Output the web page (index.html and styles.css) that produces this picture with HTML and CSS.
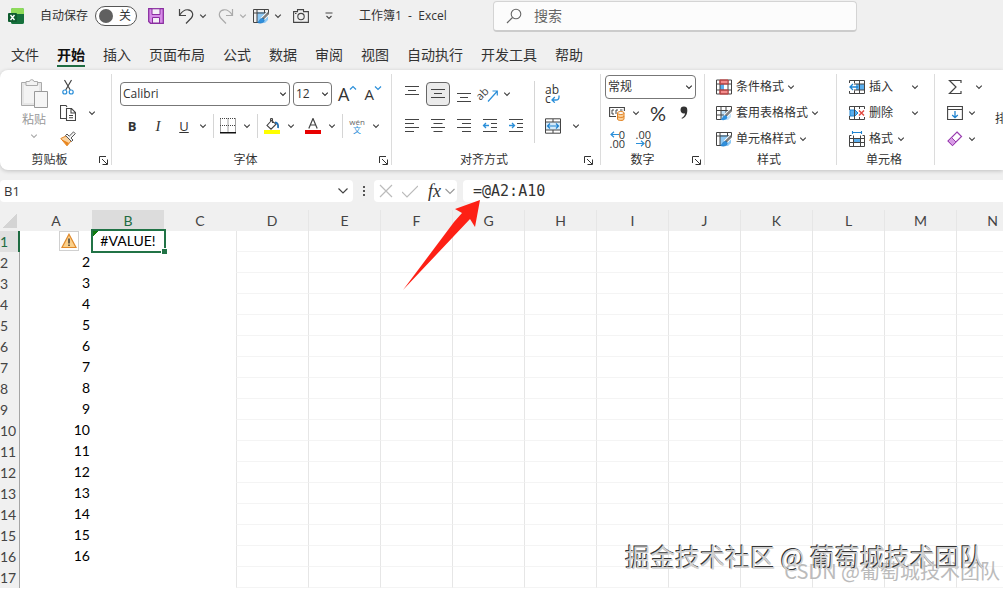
FILE: index.html
```html
<!DOCTYPE html>
<html lang="zh-CN">
<head>
  <meta charset="UTF-8"/>
  <meta name="viewport" content="width=device-width, initial-scale=1"/>
  <title>工作簿1 - Excel</title>
  <link rel="stylesheet" href="styles.css">
</head>
<body>
  <svg class="defs" aria-hidden="true">
    <symbol id="chev" viewBox="0 0 8 8"><path d="M1.2 2.6 4 5.4 6.8 2.6" fill="none" stroke="currentColor" stroke-width="1.2"/></symbol>
    <symbol id="launch" viewBox="0 0 9 9"><path d="M.5 7V.5H7M3 3l5 5M8.500 3.500v5h-5" fill="none" stroke="#333"/></symbol>
    <symbol id="pen-table" viewBox="0 0 16 16">
      <path d="M4 4h11v8l-3 3H4z" fill="#8ec9f5"/>
      <path d="M.5 1.500h15v4M.5 1.500v13h5M4 1v14M.5 5h15M11.500 1v4" fill="none" stroke="#444"/>
      <path d="M15.500 5 9 11.500" stroke="#fff" stroke-width="4"/>
      <path d="M15.500 5 9.500 11" stroke="#444" stroke-width="2.200"/><path d="m15 5.500-5 5" stroke="#ddd" stroke-width=".8"/>
      <path d="M9.800 10.200c-3-.5-2.800 3-5.300 4.300 3.300 1.500 7 .2 6.800-2.700z" fill="#2f8fdc" stroke="#1b6db5" stroke-width=".5"/>
    </symbol>
  </svg>

  <header class="titlebar">
    <svg class="logo" viewBox="0 0 16 16"><rect x="3" width="13" height="16" rx="2" fill="#21a366"/><path d="M5 0h9a2 2 0 0 1 2 2v4H3V2a2 2 0 0 1 2-2" fill="#8fdb5a"/><path d="M9 6h7v8a2 2 0 0 1-2 2H5a2 2 0 0 1-2-2V9z" fill="#16703c"/><rect y="5" width="9" height="9" rx="1" fill="#0f5c2f"/><path d="m2.500 7 4 5M6.500 7l-4 5" stroke="#fff" stroke-width="1.400"/></svg>
    <label class="autosave">自动保存
      <span class="switch"><input type="checkbox"><span>关</span></span>
    </label>
    <div class="quick">
      <button class="save" aria-label="保存"><svg class="ic" viewBox="0 0 16 16"><path d="M.7.7h14.600v14.600H2.500L.7 13.500z" fill="#d78be8" stroke="#8a2fa0" stroke-width="1.300"/><path d="M4 .8h8v5.700H4zM4.500 9.500h7v5.500h-7z" fill="#f5f0f7" stroke="#8a2fa0"/></svg></button>
      <button class="split" aria-label="撤消"><svg class="ic" viewBox="0 0 16 16"><path d="M1.500 1v6.500H8M1.800 7C4 3.500 7 1.500 10 1.800c4.500.5 6 5 3.300 8.200L8 15.500" fill="none" stroke="#444" stroke-width="1.200"/></svg><svg class="chev"><use href="#chev"/></svg></button>
      <button class="split off" aria-label="恢复"><svg class="ic" viewBox="0 0 16 16"><path d="M14.500 1v6.500H8M14.200 7C12 3.500 9 1.500 6 1.800 1.500 2.300 0 6.800 2.700 10L8 15.500" fill="none" stroke="currentColor" stroke-width="1.200"/></svg><svg class="chev"><use href="#chev"/></svg></button>
      <button class="split" aria-label="单元格样式"><svg class="ic"><use href="#pen-table"/></svg><svg class="chev"><use href="#chev"/></svg></button>
      <button aria-label="照相机"><svg class="ic" viewBox="0 0 16 16"><path d="M.6 3.600h3.900V1.600h6v2h4.900v10.800H.6z" fill="none" stroke="#444" stroke-width="1.100"/><circle cx="8" cy="8.600" r="3.200" fill="none" stroke="#444" stroke-width="1.100"/><path d="M2 5.500h1.500" stroke="#444"/></svg></button>
      <button class="more" aria-label="自定义快速访问工具栏"><svg class="chev" viewBox="0 0 8 8"><path d="M.5 1h7M1.500 4 4 6.500 6.500 4" fill="none" stroke="#444" stroke-width="1.100"/></svg></button>
    </div>
    <span class="doc">工作簿1&nbsp; -&nbsp; Excel</span>
    <label class="search">
      <svg class="ic" viewBox="0 0 16 16"><circle cx="10" cy="6" r="4.800" fill="none" stroke="#666" stroke-width="1.100"/><path d="M6.500 9.500 1 15" stroke="#666" stroke-width="1.200"/></svg>
      <input type="text" placeholder="搜索" aria-label="搜索">
    </label>
  </header>

  <nav class="tabs">
    <a href="#">文件</a>
    <a href="#" class="active">开始</a>
    <a href="#">插入</a>
    <a href="#">页面布局</a>
    <a href="#">公式</a>
    <a href="#">数据</a>
    <a href="#">审阅</a>
    <a href="#">视图</a>
    <a href="#">自动执行</a>
    <a href="#">开发工具</a>
    <a href="#">帮助</a>
  </nav>

  <section class="ribbon">
    <div class="group clipboard">
      <div class="body">
        <button class="paste">
          <svg viewBox="0 0 28 31"><path d="M1.500 4.500h20v23h-20z" fill="#e6e6e6" stroke="#aaa"/><path d="M4 7h15v18H4z" fill="#f3f3f3"/><path d="M6 7.500v-4h3.500a2.300 2.300 0 0 1 4.500 0H17.500v4z" fill="#f2f2f2" stroke="#aaa"/><path d="M14.500 13.500h13v16h-13z" fill="#f5f5f5" stroke="#999"/></svg>
          粘贴
          <svg class="chev"><use href="#chev"/></svg>
        </button>
        <div class="rows three">
          <div class="row"><button aria-label="剪切"><svg class="ic" viewBox="0 0 16 16"><path d="m4.500 1 5.800 10M11.500 1 5.700 11" stroke="#444" stroke-width="1.200"/><circle cx="4.800" cy="13" r="2" fill="none" stroke="#2b8fd9" stroke-width="1.200"/><circle cx="11.200" cy="13" r="2" fill="none" stroke="#2b8fd9" stroke-width="1.200"/></svg></button></div>
          <div class="row"><button class="split" aria-label="复制"><svg class="ic" viewBox="0 0 16 16"><path d="M6 13.500H.5V.5h5.500l1 1.500M6.500 3.500h5l4 4v8h-9zM11 3.500v4.500h4.500M9 10.500h4M9 12.800h4" fill="none" stroke="#444" stroke-width="1.100"/></svg><svg class="chev"><use href="#chev"/></svg></button></div>
          <div class="row"><button aria-label="格式刷"><svg class="ic" viewBox="0 0 16 16"><path d="M6 5 .8 7.500 7 14.800l4-4.800z" fill="#fbd3a0" stroke="#e08020"/><path d="m2 8.500 7 3.500-2 2.800z" fill="#e9851d"/><path d="m5.500 4.500 6 6 1.500-1.500-2-2 4.300-4.300-1.800-1.800L9.200 5.200l-2.200-2.200z" fill="#f4f4f4" stroke="#555"/></svg></button></div>
        </div>
      </div>
      <div class="caption"><span>剪贴板</span><button aria-label="剪贴板设置"><svg><use href="#launch"/></svg></button></div>
    </div>

    <div class="group font">
      <div class="body rows two">
        <div class="row fields">
          <select class="face" aria-label="字体"><option>Calibri</option></select>
          <select class="size" aria-label="字号"><option>12</option></select>
          <button class="grow" aria-label="增大字号">A<svg class="chev" viewBox="0 0 8 8"><path d="M1 5.500 4 2.500l3 3" fill="none" stroke="#2b8fd9" stroke-width="1.200"/></svg></button>
          <button class="shrink" aria-label="减小字号">A<svg class="chev" viewBox="0 0 8 8"><path d="m1 2.500 3 3 3-3" fill="none" stroke="#2b8fd9" stroke-width="1.200"/></svg></button>
        </div>
        <div class="row format">
          <button class="letter"><b>B</b></button>
          <button class="letter"><i>I</i></button>
          <button class="split letter"><u>U</u><svg class="chev"><use href="#chev"/></svg></button>
          <span class="sep"></span>
          <button class="split" aria-label="边框"><svg class="ic" viewBox="0 0 16 16"><path d="M.5.5v13M15.500.5v13M8 .5v13M0 .5h16M0 7.500h16" fill="none" stroke="#444" stroke-dasharray="1 1"/><path d="M0 14.800h16" stroke="#111" stroke-width="1.500"/></svg><svg class="chev"><use href="#chev"/></svg></button>
          <span class="sep"></span>
          <button class="split" aria-label="填充颜色"><svg class="ic" viewBox="0 0 16 16"><path d="M7.500 2.500 3 7.500l4 3.700 5-5zM8.500 5V1.200c0-1-2-1-2 0V3" fill="none" stroke="#444" stroke-width="1.100"/><path d="M11 4.500c2.500 0 3.500 2 3 5.500" fill="none" stroke="#1b6db5" stroke-width="1.800"/><path d="M0 12h16v4H0z" fill="#ff0"/></svg><svg class="chev"><use href="#chev"/></svg></button>
          <button class="split" aria-label="字体颜色"><svg class="ic" viewBox="0 0 16 16"><path d="M3.800 10.500 8 .5l4.200 10M5.300 7h5.400" fill="none" stroke="#444" stroke-width="1.200"/><path d="M0 12h16v4H0z" fill="#e80000"/></svg><svg class="chev"><use href="#chev"/></svg></button>
          <span class="sep"></span>
          <button class="split" aria-label="拼音指南"><span class="pinyin">wén<em>文</em></span><svg class="chev"><use href="#chev"/></svg></button>
        </div>
      </div>
      <div class="caption"><span>字体</span><button aria-label="字体设置"><svg><use href="#launch"/></svg></button></div>
    </div>

    <div class="group align">
      <div class="body">
        <div class="rows two">
          <div class="row">
            <button aria-label="顶端对齐"><svg class="ic" viewBox="0 0 16 16"><path d="M1 .5h14M4 4.500h8M1 8.500h14" stroke="#444" stroke-width="1.200"/></svg></button>
            <button class="pressed" aria-label="垂直居中"><svg class="ic" viewBox="0 0 16 16"><path d="M1 3.500h14M4 7.500h8M1 11.500h14" stroke="#444" stroke-width="1.200"/></svg></button>
            <button aria-label="底端对齐"><svg class="ic" viewBox="0 0 16 16"><path d="M1 7.500h14M4 11.500h8M1 15.500h14" stroke="#444" stroke-width="1.200"/></svg></button>
            <button class="split orient" aria-label="方向"><svg class="ic" viewBox="0 0 16 16"><text x="-5" y="9" transform="rotate(-45 4 8)" font-size="11" fill="#444">ab</text><path d="m6 15.500 9-10M10.500 5H15.300v4.500" fill="none" stroke="#2b8fd9" stroke-width="1.200"/></svg><svg class="chev"><use href="#chev"/></svg></button>
          </div>
          <div class="row">
            <button aria-label="左对齐"><svg class="ic" viewBox="0 0 16 16"><path d="M1 1.500h14M1 5.500h9M1 9.500h14M1 13.500h9" stroke="#444" stroke-width="1.200"/></svg></button>
            <button aria-label="居中"><svg class="ic" viewBox="0 0 16 16"><path d="M1 1.500h14M3.500 5.500h9M1 9.500h14M3.500 13.500h9" stroke="#444" stroke-width="1.200"/></svg></button>
            <button aria-label="右对齐"><svg class="ic" viewBox="0 0 16 16"><path d="M1 1.500h14M6 5.500h9M1 9.500h14M6 13.500h9" stroke="#444" stroke-width="1.200"/></svg></button>
            <button aria-label="减少缩进量"><svg class="ic" viewBox="0 0 16 16"><path d="M1 1.500h14M9 5.500h6M9 9.500h6M1 13.500h14" stroke="#444" stroke-width="1.200"/><path d="M7 7.500H1.500M4 5 1.500 7.500 4 10" fill="none" stroke="#2b8fd9" stroke-width="1.300"/></svg></button>
            <button aria-label="增加缩进量"><svg class="ic" viewBox="0 0 16 16"><path d="M1 1.500h14M9 5.500h6M9 9.500h6M1 13.500h14" stroke="#444" stroke-width="1.200"/><path d="M1 7.500h5.500M4 5l2.500 2.500L4 10" fill="none" stroke="#2b8fd9" stroke-width="1.300"/></svg></button>
          </div>
        </div>
        <span class="sep tall"></span>
        <div class="rows two">
          <div class="row"><button class="wrap" aria-label="自动换行">ab<span>c<svg viewBox="0 0 9 8"><path d="M8 .5v1.500q0 3-3 3H1M3.800 2 1 5l2.800 2.700" fill="none" stroke="#2b8fd9" stroke-width="1.300"/></svg></span></button></div>
          <div class="row"><button class="split wide" aria-label="合并后居中"><svg class="ic" viewBox="0 0 16 16"><path d="M1 4h14v8H1z" fill="#d5ebfa"/><path d="M.5.8h15v14.400H.5zM.5 4h15M.5 12h15M8 1v3M8 12v3" fill="none" stroke="#444"/><path d="M2.500 8h11M5 5.500 2.500 8 5 10.500M11 5.500 13.500 8 11 10.500" fill="none" stroke="#1f83d0" stroke-width="1.200"/></svg><svg class="chev"><use href="#chev"/></svg></button></div>
        </div>
      </div>
      <div class="caption"><span>对齐方式</span><button aria-label="对齐设置"><svg><use href="#launch"/></svg></button></div>
    </div>

    <div class="group number">
      <div class="body rows three">
        <div class="row"><select class="kind" aria-label="数字格式"><option>常规</option></select></div>
        <div class="row nums">
          <button class="split" aria-label="会计数字格式"><svg class="ic" viewBox="0 0 16 16"><path d="M7 11.500H.6v-9h14.800V6" fill="none" stroke="#444" stroke-width="1.100"/><path d="M5 5H3v4h2M9 5H7v4M11 5h2.500" fill="none" stroke="#444"/><path d="M8.500 8v6c0 2 6.500 2 6.500 0V8" fill="#fbd09a" stroke="#e08020"/><ellipse cx="11.800" cy="8" rx="3.300" ry="1.500" fill="#fff" stroke="#e08020"/><path d="M8.500 11c0 2 6.500 2 6.500 0" fill="none" stroke="#e08020"/></svg><svg class="chev"><use href="#chev"/></svg></button>
          <button class="percent">%</button>
          <button aria-label="千位分隔样式"><svg class="ic" viewBox="0 0 16 16"><path d="M4.500 5a3.300 3.300 0 1 1 6.800 0c.2 4.500-2 7.500-5.300 8.800L5.500 13C8 11.500 9 10 9 8.200 6.500 9 4.500 7.300 4.500 5" fill="#333"/></svg></button>
        </div>
        <div class="row nums">
          <button class="decimals" aria-label="增加小数位数"><span><svg viewBox="0 0 9 7"><path d="M9 3.500H1M4 .8 1 3.500l3 2.700" fill="none" stroke="#2b8fd9" stroke-width="1.200"/></svg>0</span><span>.00</span></button>
          <button class="decimals" aria-label="减少小数位数"><span>.00</span><span><svg viewBox="0 0 9 7"><path d="M0 3.500h8M5 .8l3 2.700-3 2.700" fill="none" stroke="#2b8fd9" stroke-width="1.200"/></svg>0</span></button>
        </div>
      </div>
      <div class="caption"><span>数字</span><button aria-label="数字设置"><svg><use href="#launch"/></svg></button></div>
    </div>

    <div class="group styles">
      <div class="body rows three">
        <div class="row"><button class="cmd"><svg class="ic" viewBox="0 0 16 16"><path d="M4 1h7v4H4zM4 11h7v4H4z" fill="#f58c8c"/><path d="M4 5h4v6H4z" fill="#5aaeee"/><path d="M.5 1h15v14H.5zM4 1v14M12 1v14M.5 5h15M.5 11h15" fill="none" stroke="#444"/><path d="M4 1h8v4H4zM4 11h8v4H4z" fill="none" stroke="#dc3c3c"/></svg>条件格式<svg class="chev"><use href="#chev"/></svg></button></div>
        <div class="row"><button class="cmd"><svg class="ic" viewBox="0 0 16 16"><path d="M5 5h10v7l-3 3H5z" fill="#bfe0f8"/><path d="M.5 1.500h15v4M.5 1.500v13h5M5 1v14M10 1v8M.5 5.500h15M.5 10h9" fill="none" stroke="#444"/><path d="M15.500 5 9 11.500" stroke="#fff" stroke-width="4"/><path d="M15.500 5 9.500 11" stroke="#444" stroke-width="2.200"/><path d="m15 5.500-5 5" stroke="#ddd" stroke-width=".8"/><path d="M9.800 10.200c-3-.5-2.800 3-5.300 4.300 3.300 1.500 7 .2 6.800-2.700z" fill="#2f8fdc"/></svg>套用表格格式<svg class="chev"><use href="#chev"/></svg></button></div>
        <div class="row"><button class="cmd"><svg class="ic"><use href="#pen-table"/></svg>单元格样式<svg class="chev"><use href="#chev"/></svg></button></div>
      </div>
      <div class="caption"><span>样式</span></div>
    </div>

    <div class="group cells">
      <div class="body rows three">
        <div class="row"><button class="cmd spread"><svg class="ic" viewBox="0 0 16 16"><path d="M7 5h8v6H7z" fill="#5aaeee"/><path d="M.5 4V1.500h15v13H.5V12M5.500 1.500V4M5.500 11.500v3M10.500 1.500v13M5 5h10.500M5 11h10.500" fill="none" stroke="#444"/><path d="M9 8H1M4 5 1 8l3 3" fill="none" stroke="#1f83d0" stroke-width="1.300"/></svg><span>插入</span><svg class="chev"><use href="#chev"/></svg></button></div>
        <div class="row"><button class="cmd spread"><svg class="ic" viewBox="0 0 16 16"><path d="M1 5h5l3 3-3 3H1z" fill="#5aaeee" stroke="#1f83d0"/><path d="M.5 5V1.500h15V4M.5 11v3.500h15V12M5.500 1.500v13M10.500 1.500V4M10.500 12v2.500" fill="none" stroke="#444"/><path d="m10 5.500 5 5M15 5.500l-5 5" stroke="#e0463c" stroke-width="1.400"/></svg><span>删除</span><svg class="chev"><use href="#chev"/></svg></button></div>
        <div class="row"><button class="cmd"><svg class="ic" viewBox="0 0 16 16"><path d="M5 7h6v4H5z" fill="#5aaeee"/><path d="M2.500 4.500H.5v11h15v-11h-2M4.500 4.500v11M11.500 4.500v11M.5 7.500h15M.5 11.500h15" fill="none" stroke="#444"/><path d="M3.500 1.500h9M3.500 0v3M12.500 0v3" fill="none" stroke="#1f83d0" stroke-width="1.100"/></svg><span>格式</span><svg class="chev"><use href="#chev"/></svg></button></div>
      </div>
      <div class="caption"><span>单元格</span></div>
    </div>

    <div class="group edit">
      <div class="body">
        <div class="rows three">
          <div class="row"><button class="split sum" aria-label="自动求和"><svg class="ic" viewBox="0 0 16 16"><path d="M14 4V1.500H2.500L9 8l-6.500 6.500H14V12" fill="none" stroke="#444" stroke-width="1.200"/></svg><svg class="chev"><use href="#chev"/></svg></button></div>
          <div class="row"><button class="split" aria-label="填充"><svg class="ic" viewBox="0 0 16 16"><path d="M.6 1.500h14.800v13H.6zM.6 4.500h14.800" fill="none" stroke="#444" stroke-width="1.100"/><path d="M8 6v6.500M5.200 10 8 12.700 10.800 10" fill="none" stroke="#1f83d0" stroke-width="1.300"/></svg><svg class="chev"><use href="#chev"/></svg></button></div>
          <div class="row"><button class="split" aria-label="清除"><svg class="ic" viewBox="0 0 16 16"><path d="m10 1 4.500 4.500-9 9L1 10z" fill="#fff" stroke="#9b3fb0" stroke-width="1.200"/><path d="m4.500 6.500 4.500 4.500-3.500 3.500L1 10z" fill="#d89be6" stroke="#9b3fb0"/></svg><svg class="chev"><use href="#chev"/></svg></button></div>
        </div>
        <button class="sort">排序和筛选</button>
      </div>
    </div>
  </section>

  <section class="formulabar">
    <select class="namebox" aria-label="名称框"><option>B1</option></select>
    <svg class="dots" viewBox="0 0 4 12"><path d="M1 1h2v2H1zM1 5h2v2H1zM1 9h2v2H1z" fill="#555"/></svg>
    <div class="fx">
      <button aria-label="取消"><svg class="ic" viewBox="0 0 16 16"><path d="m2 2 12 12M14 2 2 14" stroke="#bbb" stroke-width="1.200"/></svg></button>
      <button aria-label="输入"><svg class="ic" viewBox="0 0 16 16"><path d="m0 9 5 5L16 3" fill="none" stroke="#bbb" stroke-width="1.200"/></svg></button>
      <button class="fn">fx<svg viewBox="0 0 10 8"><path d="m.5 2 4.500 4.500L9.500 2" fill="none" stroke="#999" stroke-width="1.100"/></svg></button>
    </div>
    <input class="formula" type="text" value="=@A2:A10" aria-label="编辑栏">
  </section>

  <main class="sheet">
    <table>
      <thead><tr id="cols"><th class="corner"></th></tr></thead>
      <tbody id="rows"></tbody>
    </table>
  </main>

  <svg class="arrow" viewBox="0 0 80 92" aria-hidden="true"><path d="M78 1 53 10l7 4-8 9L1 91l67-71 5 8z" fill="#fd2015"/></svg>
  <div class="mark csdn">CSDN @葡萄城技术团队</div>
  <div class="mark juejin">掘金技术社区 @ 葡萄城技术团队</div>

  <script>
    const letters = 'ABCDEFGHIJKLMN'.split('');
    const cols = document.getElementById('cols');
    const rows = document.getElementById('rows');
    const warning = '<button class="warn" aria-label="错误检查"><svg viewBox="0 0 16 16"><path d="M8 1.200 15 14.500H1z" fill="#fbd08a" stroke="#e08a2c" stroke-width="1.200"/><path d="M8 5.500v5M8 11.500v1.500" stroke="#333" stroke-width="1.400"/></svg></button>';

    letters.forEach(l => {
      cols.innerHTML += `<th${l === 'B' ? ' class="on"' : ''}>${l}</th>`;
    });

    for (let r = 1; r <= 17; r++) {
      const cells = letters.map(l => {
        if (r === 1 && l === 'A') return `<td class="num">${warning}</td>`;
        if (r === 1 && l === 'B') return '<td class="selected">#VALUE!</td>';
        if (l === 'A' && r <= 16) return `<td class="num">${r}</td>`;
        return '<td></td>';
      });
      rows.innerHTML += `<tr><th${r === 1 ? ' class="on"' : ''}>${r}</th>${cells.join('')}</tr>`;
    }
  </script>
</body>
</html>
```

FILE: styles.css
```css
* { box-sizing:border-box; margin:0; padding:0 }
html, body { height:100% }
body {
  display:flex; flex-direction:column;
  position:relative; overflow:hidden;
  font-family:"Open Sans", "Noto Sans CJK SC", sans-serif;
  font-size:12px; line-height:16px;
  background:#f0f0f0; color:#333;
}
button, input, select { font:inherit; color:inherit; border:none; background:none; outline:none }
button { display:inline-flex; align-items:center; justify-content:center; flex:none }
svg { display:block; flex:none }
.defs { display:none }
.ic { width:16px; height:16px }
.chev { width:8px; height:8px; color:#444 }
.off, .off .chev { color:#aaa }
.split { gap:7px }
.split.wide { gap:11px }

/* title bar */
.titlebar { display:flex; align-items:center; height:32px; padding-left:8px; flex:none }
.logo { width:16px; height:16px }
.autosave { display:flex; align-items:center; gap:7px; margin-left:16px; white-space:nowrap }
.switch {
  display:flex; align-items:center; justify-content:space-between;
  width:42px; height:20px; padding:0 5px 0 3px;
  border:1px solid #555; border-radius:10px; background:#fff;
}
.switch input { appearance:none; width:14px; height:14px; border-radius:50%; background:#606060 }
.quick { display:flex; align-items:center; gap:11px; margin-left:11px }
.quick .split { gap:5px }
.quick .save { margin-right:3px }
.quick .off { margin-right:-5px }
.quick .more { margin-left:5px }
.doc { margin-left:26px; white-space:nowrap }
.search {
  display:flex; align-items:center; gap:12px;
  width:364px; height:31px; margin:1px 146px 0 auto; padding:0 12px;
  border:1px solid #d4d4d4; border-bottom:2px solid #ccc; border-radius:4px; background:#fcfcfc;
}
.search input { flex:1; min-width:0; font-size:14px }
.search input::placeholder { color:#666; opacity:1 }

/* tabs */
.tabs { display:flex; gap:18px; height:38px; padding:13px 0 0 11px; flex:none }
.tabs a { height:22px; font-size:14px; line-height:20px; color:#333; text-decoration:none; white-space:nowrap }
.tabs .active { color:#111; font-weight:bold; border-bottom:2px solid #1e6b41 }

/* ribbon */
.ribbon {
  display:flex; flex:none; overflow:hidden;
  height:100px; padding-top:4px;
  border-radius:8px 0 0 8px; background:#fff;
  box-shadow:0 1px 4px rgba(0,0,0,.2);
}
.group { display:flex; flex-direction:column; flex:none; border-right:1px solid #dcdcdc; height:91px }
.group .body { display:flex; height:78px; flex:none }
.group .rows { display:flex; flex-direction:column }
.row { display:flex; align-items:center }
.three .row { height:26px }
.two { padding-top:4px }
.two .row { height:32px; gap:10px }
.caption { display:flex; align-items:center; height:16px; padding-right:3px; flex:none }
.caption span { flex:1; text-align:center }
.caption svg { width:9px; height:9px }
.sep { width:1px; height:24px; margin:0 -4px; background:#d5d5d5 }
.sep.tall { height:62px; margin:7px 10px 0 }
.ribbon select {
  appearance:none; height:24px; padding-left:2px;
  border:1px solid #777; border-radius:4px;
  background:#fff url("data:image/svg+xml,%3Csvg xmlns='http://www.w3.org/2000/svg' width='8' height='8'%3E%3Cpath d='M1.200 2.600 4 5.400 6.800 2.600' fill='none' stroke='%23333' stroke-width='1.200'/%3E%3C/svg%3E") right 2px center no-repeat;
}

.clipboard { width:112px }
.paste { flex-direction:column; justify-content:flex-start; gap:3px; width:28px; margin:4px 12px 0 20px; color:#999 }
.paste svg:first-child { width:28px; height:31px }
.paste .chev { color:#aaa; margin-top:1px }
.clipboard .split { gap:12px }

.font { width:280px }
.font .rows { padding-left:8px }
.two .fields { gap:3px }
.face { width:170px }
.size { width:39px }
.grow, .shrink { align-items:flex-start; font-size:18px; line-height:20px; margin-left:3px }
.shrink { font-size:15px; margin-left:4px }
.format { padding-left:4px }
.letter { width:16px; font-size:13px }
.letter.split { width:31px }
.letter u { width:16px; text-align:center }
.letter i { font-family:"Liberation Serif", serif; font-size:15px }
.pinyin { display:flex; flex-direction:column; align-items:center; width:16px; font-size:8px; line-height:8px; color:#666 }
.pinyin em { font-style:normal; color:#2b8fd9 }

.align { width:209px; padding-left:12px }
.align .caption { margin-left:-12px; padding-right:7px }
.align .caption span { padding-right:8px }
.pressed { width:24px; height:24px; margin:0 -4px; border:1px solid #666; border-radius:4px; background:#ebebeb }
.orient { gap:5px }
.orient .ic { overflow:visible }
.wrap { flex-direction:column; align-items:flex-start; line-height:9px; width:16px }
.wrap span { display:flex; align-items:center }
.wrap svg { width:9px; height:8px }

.number { width:104px; padding-left:4px }
.number .caption { margin-left:-4px }
.number .caption span { padding-right:8px }
.kind { width:91px }
.nums { gap:10px; padding-left:4px }
.percent { width:16px; font-family:Lato, sans-serif; font-size:20px }
.decimals { flex-direction:column; align-items:flex-end; width:16px; font-size:11px; line-height:9px }
.decimals span { display:flex; align-items:center }
.decimals svg { width:9px; height:7px }

.cmd { gap:4px; white-space:nowrap }
.styles { width:132px }
.styles .rows { padding-left:11px }
.styles .cmd .chev { margin-left:-1px }
.cells { width:98px }
.cells .rows { padding-left:12px }
.spread .chev { margin-left:14px }
.edit { flex:1 0 120px; border-right:none }
.edit .body { padding-left:12px }
.edit .split { gap:5px }
.edit .sum { gap:12px }
.edit .rows { width:36px }
.sort { margin-left:12px; height:90px; white-space:nowrap }

/* formula bar */
.formulabar { display:flex; align-items:center; height:22px; margin-top:10px; flex:none }
.namebox {
  appearance:none; width:353px; height:22px; padding-left:4px;
  font-size:13px; border-radius:4px;
  background:#fff url("data:image/svg+xml,%3Csvg xmlns='http://www.w3.org/2000/svg' width='10' height='8'%3E%3Cpath d='m.5 1.500 4.500 4.500 4.500-4.500' fill='none' stroke='%23444' stroke-width='1.200'/%3E%3C/svg%3E") right 5px center no-repeat;
}
.dots { width:4px; height:12px; margin:0 8px 0 9px }
.fx { display:flex; align-items:center; gap:8px; height:22px; padding:0 2px 0 4px; background:#fff; border-radius:4px }
.fn { gap:4px; margin-left:2px; font:italic 18px/20px "Liberation Serif", serif }
.fn svg { width:10px; height:8px }
.formula {
  flex:1; min-width:0; height:22px; margin-left:6px; padding-left:10px;
  background:#fff; border-radius:4px 0 0 4px;
  font-family:"DejaVu Sans Mono", monospace; font-size:15px;
}

/* grid */
.sheet { flex:1; min-height:0; margin-top:8px; overflow:hidden; background:#fff }
table { width:1028px; table-layout:fixed; border-spacing:0; font-family:Lato, "Noto Sans CJK SC", sans-serif; font-size:14px; color:#000 }
th { font-weight:normal; color:#444; background:#f0f0f0 }
thead th { height:21px; width:72px }
thead .corner { width:20px; background:linear-gradient(135deg, #f0f0f0 50%, #d4d4d4 50%); border:3px solid #f0f0f0 }
thead .on { color:#1e6b41; background:#dcdcdc }
tbody th { height:21px; text-align:left; border-right:1px solid #a5a5a5 }
tbody .on { color:#1e6b41; background:#e0e0e0; border-right:2px solid #1e6b41 }
td { height:21px; border-bottom:1px solid #f4f4f4 }
td:nth-child(-n+4) { border-bottom-color:#fff }
td:nth-child(n+5), thead th:nth-child(n+6) { border-left:1px solid #e6e6e6 }
.num { text-align:right; padding-right:2px }
.warn { width:20px; height:20px; margin-right:11px; vertical-align:top; border:1px solid #d0d0d0; background:#fff }
.warn svg { width:16px; height:16px }
.selected { position:relative; text-align:center }
.selected::before {
  content:""; position:absolute; inset:-2px -2px -2px -1px;
  border:2px solid #217346;
  background:linear-gradient(135deg, #107c10 4px, transparent 4px);
}
.selected::after { content:""; position:absolute; right:-3px; bottom:-3px; width:5px; height:5px; background:#217346; border:1px solid #fff; border-width:1px 0 0 1px }

/* overlays */
.arrow { position:absolute; left:402px; top:199px; width:80px; height:92px }
.mark { position:absolute; white-space:nowrap; font-family:"Noto Sans CJK SC", sans-serif }
.juejin { right:18px; bottom:15px; font-size:25px; line-height:36px; color:#d0d0d0; text-shadow:-1px -1px 0 #333 }
.csdn { right:3px; bottom:4px; font-size:20px; line-height:28px; color:#bbb }
```
